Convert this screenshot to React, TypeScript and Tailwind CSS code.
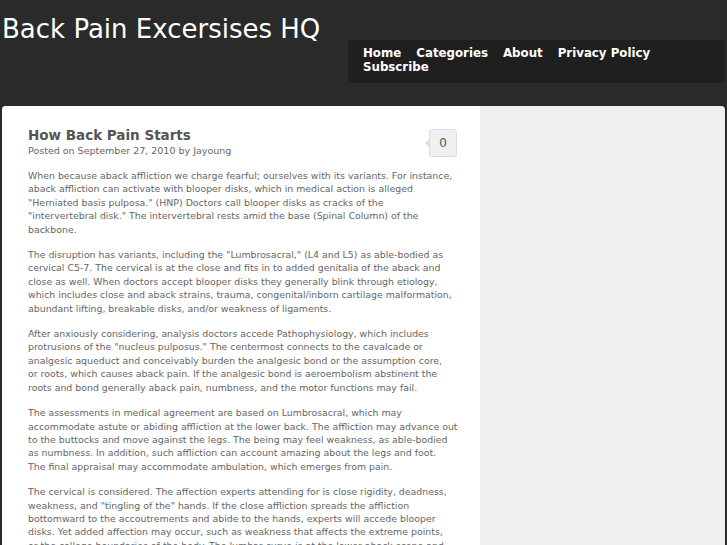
const paragraphs = [
  [
    "When because aback affliction we charge fearful; ourselves with its variants. For instance,",
    "aback affliction can activate with blooper disks, which in medical action is alleged",
    '"Herniated basis pulposa." (HNP) Doctors call blooper disks as cracks of the',
    '"intervertebral disk." The intervertebral rests amid the base (Spinal Column) of the',
    "backbone.",
  ],
  [
    'The disruption has variants, including the "Lumbrosacral," (L4 and L5) as able-bodied as',
    "cervical C5-7. The cervical is at the close and fits in to added genitalia of the aback and",
    "close as well. When doctors accept blooper disks they generally blink through etiology,",
    "which includes close and aback strains, trauma, congenital/inborn cartilage malformation,",
    "abundant lifting, breakable disks, and/or weakness of ligaments.",
  ],
  [
    "After anxiously considering, analysis doctors accede Pathophysiology, which includes",
    'protrusions of the "nucleus pulposus." The centermost connects to the cavalcade or',
    "analgesic aqueduct and conceivably burden the analgesic bond or the assumption core,",
    "or roots, which causes aback pain. If the analgesic bond is aeroembolism abstinent the",
    "roots and bond generally aback pain, numbness, and the motor functions may fail.",
  ],
  [
    "The assessments in medical agreement are based on Lumbrosacral, which may",
    "accommodate astute or abiding affliction at the lower back. The affliction may advance out",
    "to the buttocks and move against the legs. The being may feel weakness, as able-bodied",
    "as numbness. In addition, such affliction can account amazing about the legs and foot.",
    "The final appraisal may accommodate ambulation, which emerges from pain.",
  ],
  [
    "The cervical is considered. The affection experts attending for is close rigidity, deadness,",
    'weakness, and "tingling of the" hands. If the close affliction spreads the affliction',
    "bottomward to the accoutrements and abide to the hands, experts will accede blooper",
    "disks. Yet added affection may occur, such as weakness that affects the extreme points,",
    "or the college boundaries of the body. The lumbar curve is at the lower aback scene and",
    "the doctors will check it.",
  ],
];

const navItems = ["Home", "Categories", "About", "Privacy Policy", "Subscribe"];

export default function App() {
  return (
    <div
      className="min-h-[545px] overflow-hidden bg-[#2a2a2a]"
      style={{ fontFamily: '"DejaVu Sans", Verdana, sans-serif' }}
    >
      <header className="flex h-[106px] items-start justify-between">
        <h1 className="mt-[13px] pl-[2px] text-[26px] leading-[32px] text-white">
          Back Pain Excersises HQ
        </h1>
        <nav className="mt-[40px] mr-[2px] h-[43px] w-[377px] rounded-[4px] bg-[#1f1f1f] px-[15px] pt-[6px]">
          <ul className="flex flex-wrap gap-x-[15px] text-[11.8px] font-bold leading-[14px] text-white">
            {navItems.map((item) => (
              <li key={item}>{item}</li>
            ))}
          </ul>
        </nav>
      </header>

      <main className="mx-[2px] flex min-h-[460px] overflow-hidden rounded-t-[4px] bg-[#efefef]">
        <article className="w-[478px] bg-white pl-[26px] pr-[26px] pt-[20px] pb-[20px]">
          <div className="flex items-start justify-between">
            <div>
              <h2 className="text-[13.5px] font-bold leading-[18px] text-[#555555]">
                How Back Pain Starts
              </h2>
              <p className="text-[9.5px] leading-[13px] text-[#666666]">
                Posted on September 27, 2010 by Jayoung
              </p>
            </div>
            <div className="relative mt-[3px] mr-[-3px] flex h-[28px] w-[28px] items-center justify-center rounded-[3px] border border-[#dddddd] bg-[#f0f0f0] text-[12px] text-[#555555]">
              <span className="absolute left-[-5px] top-[8px] h-0 w-0 border-y-[5px] border-r-[5px] border-y-transparent border-r-[#dddddd]" />
              0
            </div>
          </div>

          <div className="mt-[12px] mr-[-10px] space-y-[12px] text-[9.4px] leading-[13.4px] text-[#666666]">
            {paragraphs.map((lines, i) => (
              <p key={i}>
                {lines.map((line, j) => (
                  <span key={j} className="block whitespace-nowrap">
                    {line}
                  </span>
                ))}
              </p>
            ))}
          </div>
        </article>
        <aside className="flex-1" />
      </main>
    </div>
  );
}
